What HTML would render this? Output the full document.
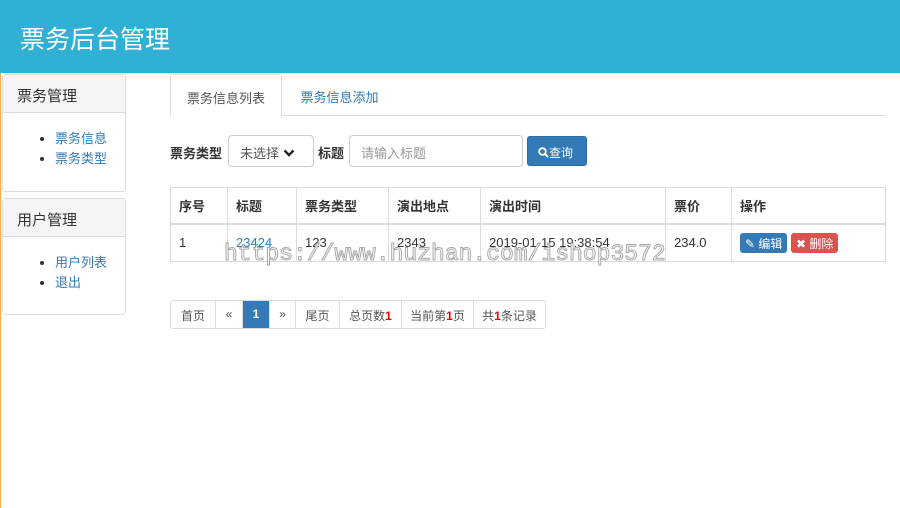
<!DOCTYPE html><html><head><meta charset="utf-8"><style>
*{box-sizing:border-box;margin:0;padding:0}
body{width:900px;height:508px;overflow:hidden;background:#fff;font-family:"Liberation Sans","Noto Sans CJK SC",sans-serif;font-size:13px;color:#333;position:relative}
.hdr{position:absolute;left:0;top:0;width:900px;height:73px;background:#31b0d6;color:#fff;font-size:25px;padding:20px 0 0 20px}
.lb{position:absolute;left:0;top:73px;width:1px;height:435px;background:#f0ad4e}
.pn{position:absolute;left:2px;width:124px;border:1px solid #ddd;border-radius:3px}
.pn .h{background:#f5f5f5;border-bottom:1px solid #ddd;height:38px;font-size:15px;padding:10px 0 0 14px}
.pn ul{margin:16px 0 0 52px;list-style:disc;font-size:13px}
.pn li{line-height:20px}
a{color:#337ab7;text-decoration:none}
.tabs{position:absolute;left:170px;top:115px;width:716px;border-top:1px solid #ddd}
.tab{position:absolute;top:74px;height:42px;padding-top:13px;text-align:center;font-size:13px}
.t1{left:170px;width:112px;border:1px solid #ddd;border-bottom:1px solid #fff;border-radius:3px 3px 0 0;color:#555;background:#fff}
.t2{left:282px;width:115px}
.lbl{position:absolute;top:143px;font-weight:bold;font-size:13px}
.box{position:absolute;top:135px;height:32px;border:1px solid #ccc;border-radius:4px;padding:7px 11px;color:#555}
.btn{position:absolute;left:527px;top:136px;width:60px;height:30px;background:#337ab7;border:1px solid #2e6da4;border-radius:3px;color:#fff;padding:7px 0 0 10px;font-size:12px}
table{position:absolute;left:170px;top:187px;width:716px;border-collapse:collapse}
td,th{border:1px solid #ddd;text-align:left;padding:0 8px;font-size:13px}
th{height:36px;border-bottom:2px solid #ddd}
td{height:38px}
.sb{display:inline-block;color:#fff;font-size:12px;border-radius:3px;padding:2px 5px;height:20px}
.pg{position:absolute;left:170px;top:300px;height:29px;display:flex;border:1px solid #ddd;border-radius:3px}
.pg span{border-left:1px solid #ddd;height:27px;padding-top:6px;text-align:center;font-size:12px;color:#555}
.pg span:first-child{border-left:none}
.r{color:#e00;font-weight:bold}
.wm{position:absolute;left:224px;top:241px;font-family:"Liberation Mono",monospace;font-size:23px;color:#fff;-webkit-text-stroke:1px #aaa;white-space:nowrap}
</style></head><body>
<div class="hdr">票务后台管理</div>
<div class="lb"></div>
<div class="pn" style="top:74px;height:118px"><div class="h">票务管理</div><ul><li><a>票务信息</a></li><li><a>票务类型</a></li></ul></div>
<div class="pn" style="top:198px;height:117px"><div class="h">用户管理</div><ul><li><a>用户列表</a></li><li><a>退出</a></li></ul></div>
<div class="tabs"></div>
<div class="tab t1">票务信息列表</div><div class="tab t2"><a>票务信息添加</a></div>
<div class="lbl" style="left:170px">票务类型</div>
<div class="box" style="left:228px;width:86px">未选择 <svg width="12" height="9" viewBox="0 0 12 9" style="vertical-align:0"><path d="M1.5 1.5l4.5 4.5 4.5-4.5" fill="none" stroke="#222" stroke-width="2.4"/></svg></div>
<div class="lbl" style="left:318px">标题</div>
<div class="box" style="left:349px;width:174px;color:#999">请输入标题</div>
<div class="btn"><svg width="11" height="11" viewBox="0 0 11 11" style="vertical-align:-1px"><circle cx="4.5" cy="4.5" r="3.3" fill="none" stroke="#fff" stroke-width="1.8"/><path d="M7 7l3 3" stroke="#fff" stroke-width="2"/></svg>查询</div>
<table><tr><th style="width:57px">序号</th><th style="width:69px">标题</th><th style="width:92px">票务类型</th><th style="width:92px">演出地点</th><th style="width:185px">演出时间</th><th style="width:66px">票价</th><th>操作</th></tr>
<tr><td>1</td><td><a>23424</a></td><td>123</td><td>2343</td><td>2019-01-15 19:38:54</td><td>234.0</td><td><span class="sb" style="background:#337ab7">✎ 编辑</span> <span class="sb" style="background:#d9534f">✖ 删除</span></td></tr></table>
<div class="wm">https://www.huzhan.com/ishop3572</div>
<div class="pg"><span style="width:44px">首页</span><span style="width:27px">«</span><span style="width:27px;background:#337ab7;color:#fff;font-weight:bold">1</span><span style="width:26px">»</span><span style="width:44px">尾页</span><span style="width:62px">总页数<b class="r">1</b></span><span style="width:72px">当前第<b class="r">1</b>页</span><span style="width:72px">共<b class="r">1</b>条记录</span></div>
</body></html>
